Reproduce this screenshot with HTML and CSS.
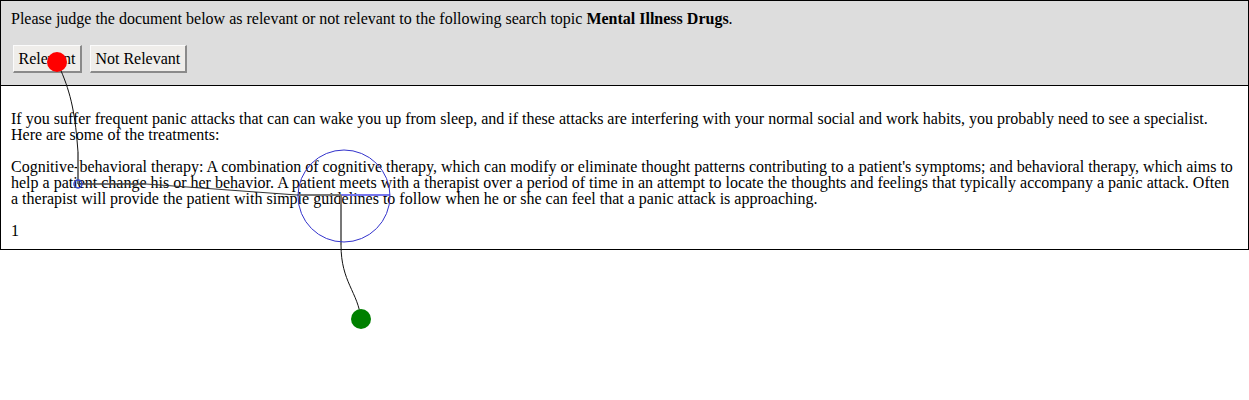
FILE: index.html
```html
<!DOCTYPE html>
<html>
<head>
<meta charset="utf-8">
<link rel="stylesheet" href="styles.css">
</head>
<body>
<div class="page">
  <div class="header">
    <div class="prompt">Please judge the document below as relevant or not relevant to the following search topic <b>Mental Illness Drugs</b>.</div>
    <div class="actions">
      <button class="btn">Relevant</button>
      <button class="btn">Not Relevant</button>
    </div>
  </div>
  <div class="doc">
    <p>If you suffer frequent panic attacks that can can wake you up from sleep, and if these attacks are interfering with your normal social and work habits, you probably need to see a specialist. Here are some of the treatments:</p>
    <p>Cognitive-behavioral therapy: A combination of cognitive therapy, which can modify or eliminate thought patterns contributing to a patient's symptoms; and behavioral therapy, which aims to help a patient change his or her behavior. A patient meets with a therapist over a period of time in an attempt to locate the thoughts and feelings that typically accompany a panic attack. Often a therapist will provide the patient with simple guidelines to follow when he or she can feel that a panic attack is approaching.</p>
    <p>1</p>
  </div>
  <svg class="trace" width="1249" height="400" viewBox="0 0 1249 400">
    <path d="M57,62 C68,85 74,105 77,140 L78,152" fill="none" stroke="#111" stroke-width="1"/>
    <path d="M78,152 L78,184" fill="none" stroke="#777" stroke-width="2"/>
    <path d="M78,184 L146,184" fill="none" stroke="#444" stroke-width="1.5"/>
    <path d="M146,184 L297,195" fill="none" stroke="#333" stroke-width="1"/>
    <path d="M297,195 L341,195" fill="none" stroke="#777" stroke-width="2"/>
    <path d="M341,195 L390,195" fill="none" stroke="#7777ee" stroke-width="2"/>
    <path d="M341,195 L341,245" fill="none" stroke="#777" stroke-width="2"/>
    <path d="M341,245 C341,282 358,292 361,319" fill="none" stroke="#111" stroke-width="1"/>
    <circle cx="344" cy="196" r="46" fill="none" stroke="#3333cc" stroke-width="1"/>
    <circle cx="78" cy="184" r="4" fill="none" stroke="#3344cc" stroke-width="1.5"/>
    <circle cx="57" cy="62" r="10" fill="#ff0000"/>
    <circle cx="361" cy="319" r="10" fill="#008000"/>
  </svg>
</div>
</body>
</html>
```
FILE: styles.css
```css
html, body {
  margin: 0;
  padding: 0;
  background: #fff;
}

.page {
  position: relative;
  width: 1249px;
  min-height: 400px;
  font-family: "Liberation Serif", "Times New Roman", serif;
  font-size: 16px;
  line-height: 16px;
  color: #000;
}

.header {
  background: #dddddd;
  border: 1px solid #000;
  padding: 10px 10px 12px 10px;
}

.prompt {
  line-height: 16px;
}

.actions {
  display: flex;
  gap: 8px;
  margin-top: 18px;
  padding-left: 2px;
}

.btn {
  box-sizing: border-box;
  height: 28px;
  padding: 0 4.5px;
  margin: 0;
  font-family: "Liberation Serif", "Times New Roman", serif;
  font-size: 16px;
  line-height: 25px;
  color: #000;
  background: #efedea;
  border-style: solid;
  border-width: 1px 2px 2px 1px;
  border-color: #fbfbfb #8a8a8a #8a8a8a #fbfbfb;
  border-radius: 0;
  appearance: none;
  -webkit-appearance: none;
}

.doc {
  border: 1px solid #000;
  border-top: none;
  padding: 9px 10px 10px 10px;
}

.doc p {
  margin: 16px 0 0 0;
}

.trace {
  position: absolute;
  left: 0;
  top: 0;
  pointer-events: none;
}
```
